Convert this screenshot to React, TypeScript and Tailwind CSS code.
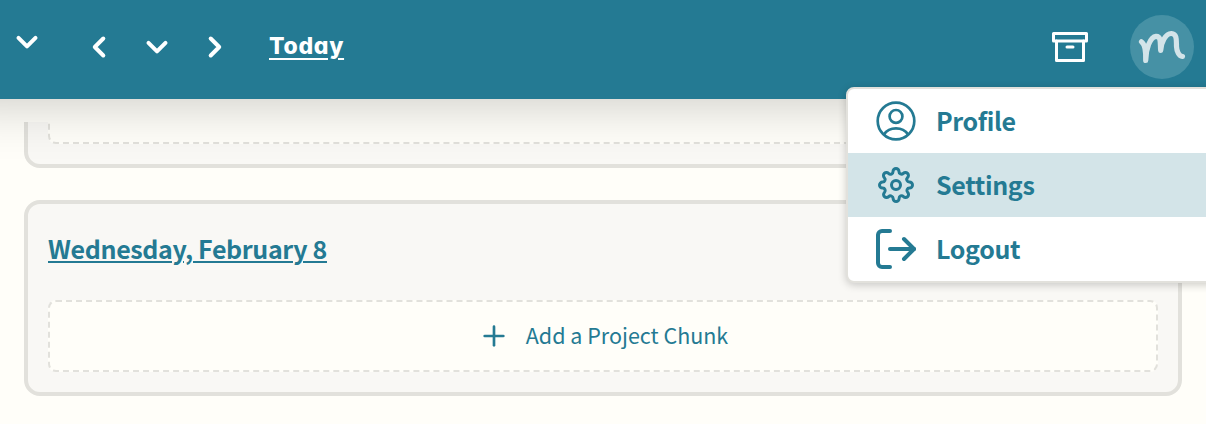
import type { ReactNode } from "react";
import { FiArchive, FiLogOut, FiPlus, FiSettings } from "react-icons/fi";

const chevrons = {
  down: "M3.5 7.8 12 16.3 20.5 7.8",
  left: "M16.3 3.5 7.8 12 16.3 20.5",
  right: "M7.7 3.5 16.2 12 7.7 20.5",
};

function Chevron({
  direction,
  className = "",
}: {
  direction: keyof typeof chevrons;
  className?: string;
}) {
  return (
    <button aria-label={direction} className={className} type="button">
      <svg
        className="size-6"
        fill="none"
        stroke="currentColor"
        strokeLinecap="round"
        strokeLinejoin="round"
        strokeWidth="4"
        viewBox="0 0 24 24"
      >
        <path d={chevrons[direction]} />
      </svg>
    </button>
  );
}

function ProfileIcon() {
  return (
    <svg
      className="size-10"
      fill="none"
      stroke="currentColor"
      strokeWidth="2.7"
      viewBox="0 0 40 40"
    >
      <circle cx="20" cy="20" r="18.3" />
      <circle cx="20" cy="15.4" r="6.4" />
      <path d="M8 33.4C10.6 29.4 15 27.3 20 27.3s9.4 2.1 12 6.1" />
    </svg>
  );
}

function Avatar() {
  return (
    <div className="size-16 rounded-full bg-[#4691a5] text-[#d3e4e9]">
      <svg
        className="size-16"
        fill="none"
        stroke="currentColor"
        strokeLinecap="round"
        strokeLinejoin="round"
        strokeWidth="5.2"
        viewBox="0 0 64 64"
      >
        <path d="M11.5 26.8C14.5 28.8 16 34 15.7 45.5 15.8 34 20 22 26 21.3c5.5-.4 4 8 4.7 14.2C31 28 35.5 18.2 41.5 18.5c5.8.3 4.8 7.5 5 13 .2 5 2.5 9.5 6 10" />
      </svg>
    </div>
  );
}

function MenuItem({
  icon,
  label,
  active = false,
}: {
  icon: ReactNode;
  label: string;
  active?: boolean;
}) {
  return (
    <a
      className={`flex h-16 items-center gap-5 pl-7 ${active ? "bg-[#d3e4e8]" : ""}`}
      href="#"
    >
      <span className="flex size-10 items-center justify-center">{icon}</span>
      <span className="pb-0.5 text-[25px] leading-8 font-bold tracking-[-0.35px]">
        {label}
      </span>
    </a>
  );
}

function DayCard({ title }: { title?: string }) {
  return (
    <section className="h-[196px] shrink-0 rounded-2xl border-4 border-[#e2e1dc] bg-[#f9f8f5] px-5 pt-6 pb-5">
      <h2 className="h-10 text-[25px] leading-10 font-bold tracking-[-0.35px] underline decoration-2 underline-offset-2">
        {title}
      </h2>
      <button
        className="mt-8 flex h-[72px] w-full items-center justify-center gap-4 rounded-lg border-2 border-dashed border-[#e2e1dc] bg-[#fffef9] text-[21.5px]"
        type="button"
      >
        {title && (
          <>
            <FiPlus size={32} />
            <span className="pb-0.5">Add a Project Chunk</span>
          </>
        )}
      </button>
    </section>
  );
}

export default function App() {
  return (
    <div className="relative h-[424px] overflow-hidden bg-[#fffef9] font-['Noto_Sans_CJK_SC',sans-serif] text-[#247a93]">
      <header className="relative z-10 -mx-16 flex h-[99px] items-start bg-[#247a93] px-16 text-white shadow-[0_0_60px_rgba(0,0,0,0.24)]">
        <nav className="flex h-[94px] items-center">
          <Chevron className="-mt-[10px] ml-[15px]" direction="down" />
          <Chevron className="ml-12" direction="left" />
          <Chevron className="ml-[34px]" direction="down" />
          <Chevron className="ml-[34px]" direction="right" />
          <a
            className="ml-[42px] pb-0.5 font-['Inter',sans-serif] text-[23px] font-extrabold tracking-[0.7px] underline decoration-2 underline-offset-4 [font-feature-settings:'cv11']"
            href="#"
          >
            Today
          </a>
        </nav>
        <div className="ml-auto flex h-[94px] items-center gap-[42px] pr-3">
          <FiArchive size={36} />
          <Avatar />
        </div>
      </header>

      <main className="px-6 pt-[23px]">
        <div className="flex h-[46px] flex-col justify-end overflow-hidden">
          <DayCard />
        </div>
        <div className="mt-8">
          <DayCard title="Wednesday, February 8" />
        </div>
      </main>

      <div className="absolute top-[87px] -right-4 z-20 w-[376px] overflow-hidden rounded-lg border-2 border-[#e2e1dc] bg-white shadow-[0_2px_8px_rgba(0,0,0,0.2)]">
        <MenuItem icon={<ProfileIcon />} label="Profile" />
        <MenuItem active icon={<FiSettings size={36} />} label="Settings" />
        <MenuItem
          icon={<FiLogOut className="shrink-0" size={48} />}
          label="Logout"
        />
      </div>
    </div>
  );
}
